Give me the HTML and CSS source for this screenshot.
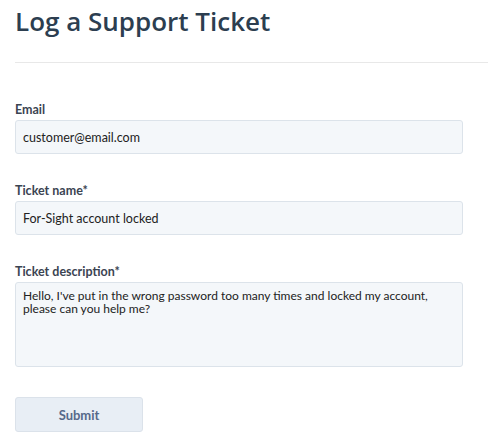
FILE: index.html
```html
<!DOCTYPE html>
<html lang="en">
<head>
    <meta charset="UTF-8">
    <meta name="viewport" content="width=device-width, initial-scale=1.0">
    <title>Log a Support Ticket</title>
    <link rel="stylesheet" href="styles.css">
</head>
<body>
    <div class="container">
        <h1>Log a Support Ticket</h1>
        <hr class="divider">

        <form class="ticket-form">
            <div class="field">
                <label for="email">Email</label>
                <input type="text" id="email" value="customer@email.com">
            </div>
            <div class="field">
                <label for="ticketName">Ticket name*</label>
                <input type="text" id="ticketName" value="For-Sight account locked">
            </div>
            <div class="field">
                <label for="ticketDesc">Ticket description*</label>
                <textarea id="ticketDesc">Hello, I've put in the wrong password too many times and locked my account,
please can you help me?</textarea>
            </div>
            <button type="submit" class="button">Submit</button>
        </form>
    </div>
</body>
</html>
```

FILE: styles.css
```css
body {
    font-family: 'Lato', 'Open Sans', sans-serif;
    background-color: #fff;
    margin: 0;
    padding: 0;
}
.container {
    padding: 5px 10px 0 15px;
}
h1 {
    font-family: 'Open Sans', sans-serif;
    font-size: 26px;
    font-weight: 600;
    line-height: 32px;
    color: #2c3e50;
    margin: 0;
}
.divider {
    border: none;
    border-top: 1px solid #e8e8e8;
    margin: 25px 0 38px;
}
.field {
    margin-bottom: 28px;
}
.field label {
    display: block;
    font-size: 12.5px;
    font-weight: bold;
    line-height: 18px;
    color: #3b4452;
    margin-bottom: 1px;
}
.field input,
.field textarea {
    display: block;
    box-sizing: border-box;
    width: 448px;
    font-family: inherit;
    font-size: 12.5px;
    color: #222;
    background: #f4f7fa;
    border: 1px solid #dce3ea;
    border-radius: 3px;
    margin: 0;
}
.field input {
    height: 34px;
    padding: 0 7px;
}
.field textarea {
    height: 85px;
    padding: 6px 7px;
    font-size: 12px;
    line-height: 13px;
    white-space: pre;
    overflow: hidden;
    resize: none;
}
.ticket-form .field:last-of-type {
    margin-bottom: 30px;
}
.button {
    display: block;
    width: 128px;
    height: 35px;
    font-family: inherit;
    font-size: 13px;
    font-weight: bold;
    color: #56698a;
    background-color: #e8eef5;
    border: 1px solid #dbe2ea;
    border-radius: 3px;
    cursor: pointer;
}
```
